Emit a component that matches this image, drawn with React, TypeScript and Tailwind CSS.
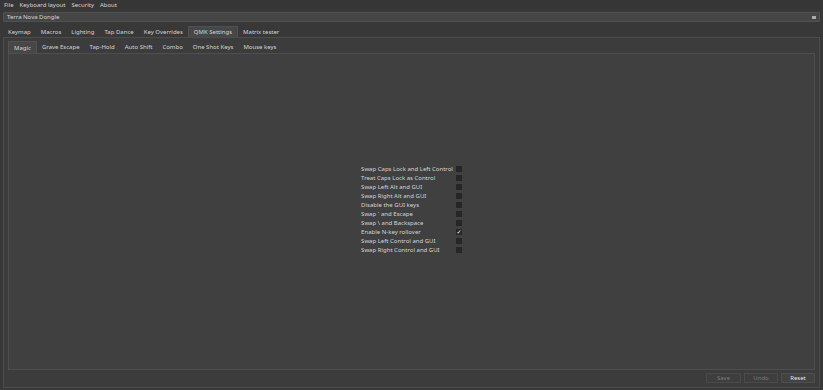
import React from "react";

const mainTabs = ["Keymap", "Macros", "Lighting", "Tap Dance", "Key Overrides", "QMK Settings", "Matrix tester"];
const subTabs = ["Magic", "Grave Escape", "Tap-Hold", "Auto Shift", "Combo", "One Shot Keys", "Mouse keys"];
const options: [string, boolean][] = [
  ["Swap Caps Lock and Left Control", false],
  ["Treat Caps Lock as Control", false],
  ["Swap Left Alt and GUI", false],
  ["Swap Right Alt and GUI", false],
  ["Disable the GUI keys", false],
  ["Swap ` and Escape", false],
  ["Swap \\ and Backspace", false],
  ["Enable N-key rollover", true],
  ["Swap Left Control and GUI", false],
  ["Swap Right Control and GUI", false],
];

export default function App() {
  return (
    <div
      className="w-[823px] h-[390px] bg-[#383838] text-[#d4d4d4] flex flex-col overflow-hidden text-[6px] leading-none"
      style={{ fontFamily: '"Noto Sans", "DejaVu Sans", sans-serif' }}
    >
      {/* menu bar */}
      <div className="h-[9px] flex items-center gap-[6px] px-[4px] bg-[#363636]">
        <span>File</span>
        <span>Keyboard layout</span>
        <span>Security</span>
        <span>About</span>
      </div>
      {/* combobox */}
      <div className="mx-[3px] mt-[3px] h-[10px] bg-[#464646] border border-[#505050] rounded-[1px] flex items-center justify-between px-[3px]">
        <span>Terra Nova Dongle</span>
        <span className="w-[4px] h-[3px] bg-[#aaaaaa]" />
      </div>
      {/* main tabs */}
      <div className="mx-[3px] mt-[4px] flex h-[11px]">
        {mainTabs.map((t) => (
          <div
            key={t}
            className={
              "px-[5px] flex items-center " +
              (t === "QMK Settings" ? "bg-[#474747] border-t border-x border-[#505050] rounded-t-[1px]" : "")
            }
          >
            {t}
          </div>
        ))}
      </div>
      <div className="mx-[3px] mb-[2px] flex-1 border border-[#4c4c4c] bg-[#3c3c3c] flex flex-col px-[4px] pt-[3px] pb-[4px]">
        <div className="flex h-[12px]">
          {subTabs.map((t) => (
            <div
              key={t}
              className={
                "px-[5px] flex items-center " +
                (t === "Magic" ? "bg-[#474747] border-t border-x border-[#525252]" : "")
              }
            >
              {t}
            </div>
          ))}
        </div>
        <div className="flex-1 border border-[#4e4e4e] bg-[#404040] flex items-center justify-center">
          <div className="flex flex-col gap-[2px] mt-[-4px]">
            {options.map(([label, checked]) => (
              <div key={label} className="flex items-center justify-between h-[7px] gap-[3px]">
                <span className="whitespace-pre">{label}</span>
                <span className="w-[6px] h-[6px] bg-[#262626] flex items-center justify-center text-[6px] text-white">
                  {checked ? "✓" : ""}
                </span>
              </div>
            ))}
          </div>
        </div>
        <div className="flex justify-end gap-[3px] mt-[3px] h-[10px]">
          <div className="w-[35px] border border-[#4a4a4a] bg-[#3e3e3e] flex items-center justify-center text-[#7a7a7a]">Save</div>
          <div className="w-[34px] border border-[#4a4a4a] bg-[#3e3e3e] flex items-center justify-center text-[#7a7a7a]">Undo</div>
          <div className="w-[34px] border border-[#4e4e4e] bg-[#424242] flex items-center justify-center text-[#e0e0e0]">Reset</div>
        </div>
      </div>
    </div>
  );
}
